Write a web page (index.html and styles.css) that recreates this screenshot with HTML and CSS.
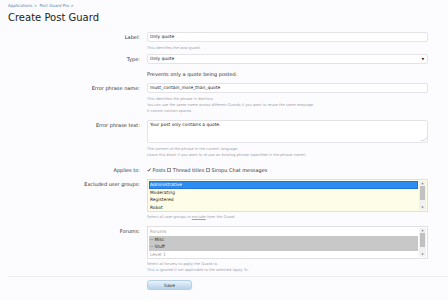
FILE: index.html
```html
<!DOCTYPE html>
<html>
  <head>
    <title>Create Post Guard</title>
    <meta charset="UTF-8" />
    <link rel="stylesheet" href="styles.css">
  </head>
  <body>
    <div class="crumbs">Applications &gt; &nbsp;Post Guard Pro &gt;</div>
    <h1>Create Post Guard</h1>
    <form class="guard">
      <div class="row r-label">
        <label class="lbl">Label:</label>
        <div class="ctrl">
          <div class="field">Only quote</div>
          <p class="hint">This identifies the post guard.</p>
        </div>
      </div>
      <div class="row r-type">
        <label class="lbl">Type:</label>
        <div class="ctrl">
          <div class="field select">Only quote<span class="arrow">&#9660;</span></div>
          <p class="explain">Prevents only a quote being posted.</p>
        </div>
      </div>
      <div class="row r-name">
        <label class="lbl">Error phrase name:</label>
        <div class="ctrl">
          <div class="field">must_contain_more_than_quote</div>
          <p class="hint">This identifies the phrase in XenForo.<br />You can use the same name across different Guards if you want to reuse the same message.<br />It cannot contain spaces.</p>
        </div>
      </div>
      <div class="row r-text">
        <label class="lbl">Error phrase text:</label>
        <div class="ctrl">
          <div class="field area">Your post only contains a quote.<span class="grip"></span></div>
          <p class="hint">The content of the phrase in the current language.<br />Leave this blank if you want to re-use an existing phrase (specified in the phrase name).</p>
        </div>
      </div>
      <div class="row r-applies">
        <label class="lbl">Applies to:</label>
        <div class="ctrl checks">
          <span class="box on"><svg viewBox="0 0 4 4" width="4" height="4"><path d="M0.6 2.1 L1.6 3.2 L3.5 0.5" fill="none" stroke="#222" stroke-width="0.8"/></svg></span> Posts
          <span class="box"></span> Thread titles
          <span class="box"></span> Siropu Chat messages
        </div>
      </div>
      <div class="row r-groups">
        <label class="lbl">Excluded user groups:</label>
        <div class="ctrl">
          <div class="list yellow">
            <div class="items">
              <div class="item sel">Administrative</div>
              <div class="item">Moderating</div>
              <div class="item">Registered</div>
              <div class="item">Robot</div>
            </div>
            <div class="scroll"><span>&#9650;</span><i class="thumb"></i><span>&#9660;</span></div>
          </div>
          <p class="hint near">Select all user groups to <u>exclude</u> from the Guard.</p>
        </div>
      </div>
      <div class="row r-forums">
        <label class="lbl">Forums:</label>
        <div class="ctrl">
          <div class="list">
            <div class="items">
              <div class="item dim">Forums</div>
              <div class="item grey">-- Misc</div>
              <div class="item grey">-- Stuff</div>
              <div class="item dim">Level 1</div>
            </div>
            <div class="scroll"><span>&#9650;</span><i class="thumb"></i><span>&#9660;</span></div>
          </div>
          <p class="hint near">Select all forums to apply the Guard to.<br />This is ignored if not applicable to the selected Apply To.</p>
        </div>
      </div>
      <div class="submit">
        <button type="button">Save</button>
      </div>
    </form>
  </body>
</html>
```

FILE: styles.css
```css
body {
  margin: 0;
  padding: 3px 0 0 8px;
  background: #fcfcff;
  font-family: "DejaVu Sans", Verdana, sans-serif;
  color: #333;
}
.crumbs {
  font-size: 4px;
  line-height: 5px;
  color: #5a7ea5;
}
h1 {
  margin: 4px 0 0;
  font-family: "DejaVu Sans", sans-serif;
  font-weight: normal;
  font-size: 10px;
  line-height: 12px;
  color: #222;
}
.guard {
  margin-top: 8px;
}
.row {
  display: grid;
  grid-template-columns: 132px 281px;
  column-gap: 7px;
}
.lbl {
  text-align: right;
  font-size: 5px;
  line-height: 10px;
  color: #333;
}
.ctrl {
  font-size: 5px;
}
.field {
  box-sizing: border-box;
  height: 10px;
  border: 1px solid #e4e4e8;
  border-radius: 2px;
  background: #fff;
  padding: 0 2px;
  font-size: 4.4px;
  line-height: 8px;
  color: #222;
  position: relative;
}
.select .arrow {
  position: absolute;
  right: 3px;
  top: 0;
  font-size: 3px;
  color: #111;
}
.area {
  height: 23px;
  line-height: 8px;
}
.grip {
  position: absolute;
  right: 1px;
  bottom: 1px;
  width: 3px;
  height: 3px;
  border-right: 1px solid #bbb;
  border-bottom: 1px solid #bbb;
  transform: skew(-45deg);
  opacity: 0.6;
}
.hint {
  margin: 3px 0 0 0;
  font-size: 3.6px;
  line-height: 6px;
  color: #a0a0a8;
}
.hint.near {
  margin-top: 2px;
}
.explain {
  margin: 6px 0 0;
  font-size: 5px;
  line-height: 8px;
  color: #333;
}
.r-type {
  margin-top: 3px;
}
.r-name {
  margin-top: 5px;
}
.r-text {
  margin-top: 6px;
}
.r-applies {
  margin-top: 7px;
}
.checks {
  font-size: 5px;
  line-height: 10px;
  color: #333;
}
.box {
  display: inline-block;
  box-sizing: border-box;
  width: 4px;
  height: 4px;
  border: 0.5px solid #999;
  background: #f4f4f4;
  vertical-align: 0;
  line-height: 0;
}
.box svg {
  display: block;
}
.box.on {
  border: 0;
  background: none;
}
.r-groups {
  margin-top: 4px;
}
.list {
  box-sizing: border-box;
  height: 33px;
  border: 1px solid #e0e0e4;
  background: #fff;
  display: flex;
  padding: 1px;
  overflow: hidden;
}
.list.yellow {
  background: #fefee8;
}
.items {
  flex: 1;
}
.item {
  height: 7.5px;
  line-height: 7.5px;
  padding-left: 1px;
  font-size: 4.4px;
  color: #222;
}
.item.sel {
  background: #2d8cf0;
  color: #fff;
  box-shadow: inset 0 0 0 0.5px #1a5fb0;
}
.item.grey {
  background: #c8c8c8;
  color: #333;
}
.item.dim {
  color: #999;
}
.scroll {
  width: 7px;
  margin-left: 1px;
  display: flex;
  flex-direction: column;
  align-items: center;
  background: #f1f1f1;
  font-size: 2.5px;
  color: #666;
}
.scroll span {
  height: 5px;
  line-height: 5px;
}
.thumb {
  flex: 1;
  width: 5px;
  margin-bottom: 5px;
  background: #c1c1c1;
}
.r-forums {
  margin-top: 6px;
}
.submit {
  display: flex;
  margin-top: 3px;
  border-top: 1px solid #ececf0;
  padding: 3px 0 0 139px;
}
button {
  width: 45px;
  height: 10px;
  padding: 0;
  border: 1px solid #b8d0e4;
  border-radius: 3px;
  background: linear-gradient(#eaf3fb, #b4d2ea);
  box-shadow: 0 1px 1px rgba(0, 0, 0, 0.15);
  font-family: "DejaVu Sans", sans-serif;
  font-size: 4.4px;
  color: #333;
}
```
